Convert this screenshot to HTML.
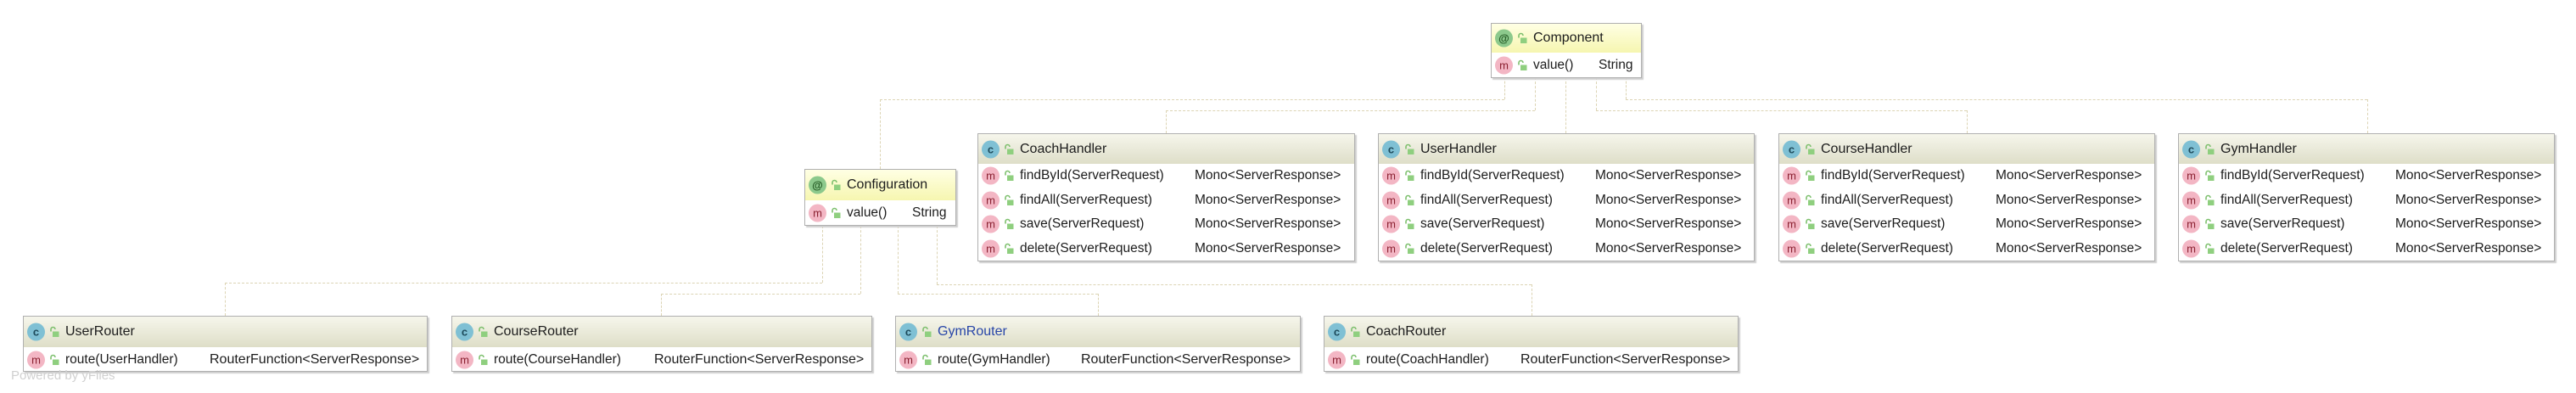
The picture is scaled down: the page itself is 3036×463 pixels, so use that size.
<!DOCTYPE html>
<html><head><meta charset="utf-8"><style>
*{margin:0;padding:0;box-sizing:border-box}
body{width:3036px;height:463px;background:#fff;position:relative;overflow:hidden;font-family:"Liberation Sans","DejaVu Sans",sans-serif;color:#1c1c1c}
.box{position:absolute;background:#fff;border:1px solid #b0b0b0;box-shadow:2px 2px 1px #cfcfcf}
.hd{height:35px;background:linear-gradient(#f6f6ec,#dedec8);position:relative;font-size:16px}
.ann .hd{background:linear-gradient(#ffffe4,#f6f6b0)}
.row{height:28.6px;position:relative;font-size:15.5px}
.t{position:absolute;top:50%;transform:translateY(-50%);white-space:nowrap}
.ic{position:absolute;top:50%;transform:translateY(-50%);left:4px;width:21px;height:21px;border-radius:50%;text-align:center;line-height:21px;font-size:13px}
.c{background:#7fc0d4;color:#1d4a5a;font-weight:bold}
.m{background:#f3b6c4;color:#8a2030}
.a{background:#8cc98c;color:#245a24;font-weight:bold}
.lk{position:absolute;top:50%;transform:translateY(-50%);left:30px;width:12px;height:13px}
.ln{position:absolute;border-color:#dcd4b4;border-style:dashed;border-width:0}
.h{height:0;border-top-width:1px}
.v{width:0;border-left-width:1px}
.rf{left:219px;font-size:16px}
</style></head><body>

<div class="ln v" style="left:1773px;top:91px;height:26px"></div>
<div class="ln h" style="left:1037px;top:117px;width:736px"></div>
<div class="ln v" style="left:1037px;top:117px;height:82px"></div>
<div class="ln v" style="left:1809px;top:91px;height:39px"></div>
<div class="ln h" style="left:1374px;top:130px;width:435px"></div>
<div class="ln v" style="left:1374px;top:130px;height:27px"></div>
<div class="ln v" style="left:1845px;top:91px;height:66px"></div>
<div class="ln v" style="left:1881px;top:91px;height:39px"></div>
<div class="ln h" style="left:1881px;top:130px;width:437px"></div>
<div class="ln v" style="left:2318px;top:130px;height:27px"></div>
<div class="ln v" style="left:1916px;top:91px;height:26px"></div>
<div class="ln h" style="left:1916px;top:117px;width:874px"></div>
<div class="ln v" style="left:2790px;top:117px;height:40px"></div>

<div class="ln v" style="left:969px;top:266px;height:67px"></div>
<div class="ln h" style="left:265px;top:333px;width:704px"></div>
<div class="ln v" style="left:265px;top:333px;height:39px"></div>
<div class="ln v" style="left:1014px;top:266px;height:80px"></div>
<div class="ln h" style="left:779px;top:346px;width:235px"></div>
<div class="ln v" style="left:779px;top:346px;height:26px"></div>
<div class="ln v" style="left:1058px;top:266px;height:80px"></div>
<div class="ln h" style="left:1058px;top:346px;width:236px"></div>
<div class="ln v" style="left:1294px;top:346px;height:26px"></div>
<div class="ln v" style="left:1104px;top:266px;height:69px"></div>
<div class="ln h" style="left:1104px;top:335px;width:701px"></div>
<div class="ln v" style="left:1805px;top:335px;height:37px"></div>

<svg width="0" height="0" style="position:absolute"><defs>
<symbol id="lock" viewBox="0 0 12 13"><path d="M2 6V3.5a2.5 2.5 0 0 1 5 0" fill="none" stroke="#7cbf6c" stroke-width="1.6"/><rect x="4" y="6" width="7.5" height="6.5" fill="#8fcf7f"/></symbol>
</defs></svg>

<div class="box ann" style="left:1757px;top:27px;width:178px;height:65px">
 <div class="hd" style="height:34px"><span class="ic a">@</span><svg class="lk"><use href="#lock"/></svg><span class="t" style="left:49px">Component</span></div>
 <div class="row" style="height:30px"><span class="ic m">m</span><svg class="lk"><use href="#lock"/></svg><span class="t" style="left:49px">value()</span><span class="t" style="left:126px">String</span></div>
</div>

<div class="box ann" style="left:948px;top:199px;width:179px;height:67px">
 <div class="hd" style="height:36px"><span class="ic a">@</span><svg class="lk"><use href="#lock"/></svg><span class="t" style="left:49px">Configuration</span></div>
 <div class="row" style="height:30px"><span class="ic m">m</span><svg class="lk"><use href="#lock"/></svg><span class="t" style="left:49px">value()</span><span class="t" style="left:126px">String</span></div>
</div>

<div class="box" style="left:1152px;top:157px;width:445px;height:151px">
 <div class="hd"><span class="ic c">c</span><svg class="lk"><use href="#lock"/></svg><span class="t" style="left:49px">CoachHandler</span></div>
 <div class="row"><span class="ic m">m</span><svg class="lk"><use href="#lock"/></svg><span class="t" style="left:49px">findById(ServerRequest)</span><span class="t" style="left:255px">Mono&lt;ServerResponse&gt;</span></div>
 <div class="row"><span class="ic m">m</span><svg class="lk"><use href="#lock"/></svg><span class="t" style="left:49px">findAll(ServerRequest)</span><span class="t" style="left:255px">Mono&lt;ServerResponse&gt;</span></div>
 <div class="row"><span class="ic m">m</span><svg class="lk"><use href="#lock"/></svg><span class="t" style="left:49px">save(ServerRequest)</span><span class="t" style="left:255px">Mono&lt;ServerResponse&gt;</span></div>
 <div class="row"><span class="ic m">m</span><svg class="lk"><use href="#lock"/></svg><span class="t" style="left:49px">delete(ServerRequest)</span><span class="t" style="left:255px">Mono&lt;ServerResponse&gt;</span></div>
</div>
<div class="box" style="left:1624px;top:157px;width:444px;height:151px">
 <div class="hd"><span class="ic c">c</span><svg class="lk"><use href="#lock"/></svg><span class="t" style="left:49px">UserHandler</span></div>
 <div class="row"><span class="ic m">m</span><svg class="lk"><use href="#lock"/></svg><span class="t" style="left:49px">findById(ServerRequest)</span><span class="t" style="left:255px">Mono&lt;ServerResponse&gt;</span></div>
 <div class="row"><span class="ic m">m</span><svg class="lk"><use href="#lock"/></svg><span class="t" style="left:49px">findAll(ServerRequest)</span><span class="t" style="left:255px">Mono&lt;ServerResponse&gt;</span></div>
 <div class="row"><span class="ic m">m</span><svg class="lk"><use href="#lock"/></svg><span class="t" style="left:49px">save(ServerRequest)</span><span class="t" style="left:255px">Mono&lt;ServerResponse&gt;</span></div>
 <div class="row"><span class="ic m">m</span><svg class="lk"><use href="#lock"/></svg><span class="t" style="left:49px">delete(ServerRequest)</span><span class="t" style="left:255px">Mono&lt;ServerResponse&gt;</span></div>
</div>
<div class="box" style="left:2096px;top:157px;width:444px;height:151px">
 <div class="hd"><span class="ic c">c</span><svg class="lk"><use href="#lock"/></svg><span class="t" style="left:49px">CourseHandler</span></div>
 <div class="row"><span class="ic m">m</span><svg class="lk"><use href="#lock"/></svg><span class="t" style="left:49px">findById(ServerRequest)</span><span class="t" style="left:255px">Mono&lt;ServerResponse&gt;</span></div>
 <div class="row"><span class="ic m">m</span><svg class="lk"><use href="#lock"/></svg><span class="t" style="left:49px">findAll(ServerRequest)</span><span class="t" style="left:255px">Mono&lt;ServerResponse&gt;</span></div>
 <div class="row"><span class="ic m">m</span><svg class="lk"><use href="#lock"/></svg><span class="t" style="left:49px">save(ServerRequest)</span><span class="t" style="left:255px">Mono&lt;ServerResponse&gt;</span></div>
 <div class="row"><span class="ic m">m</span><svg class="lk"><use href="#lock"/></svg><span class="t" style="left:49px">delete(ServerRequest)</span><span class="t" style="left:255px">Mono&lt;ServerResponse&gt;</span></div>
</div>
<div class="box" style="left:2567px;top:157px;width:444px;height:151px">
 <div class="hd"><span class="ic c">c</span><svg class="lk"><use href="#lock"/></svg><span class="t" style="left:49px">GymHandler</span></div>
 <div class="row"><span class="ic m">m</span><svg class="lk"><use href="#lock"/></svg><span class="t" style="left:49px">findById(ServerRequest)</span><span class="t" style="left:255px">Mono&lt;ServerResponse&gt;</span></div>
 <div class="row"><span class="ic m">m</span><svg class="lk"><use href="#lock"/></svg><span class="t" style="left:49px">findAll(ServerRequest)</span><span class="t" style="left:255px">Mono&lt;ServerResponse&gt;</span></div>
 <div class="row"><span class="ic m">m</span><svg class="lk"><use href="#lock"/></svg><span class="t" style="left:49px">save(ServerRequest)</span><span class="t" style="left:255px">Mono&lt;ServerResponse&gt;</span></div>
 <div class="row"><span class="ic m">m</span><svg class="lk"><use href="#lock"/></svg><span class="t" style="left:49px">delete(ServerRequest)</span><span class="t" style="left:255px">Mono&lt;ServerResponse&gt;</span></div>
</div>

<div class="box" style="left:27px;top:372px;width:477px;height:66px">
 <div class="hd" style="height:36px"><span class="ic c">c</span><svg class="lk"><use href="#lock"/></svg><span class="t" style="left:49px">UserRouter</span></div>
 <div class="row" style="height:29px"><span class="ic m">m</span><svg class="lk"><use href="#lock"/></svg><span class="t" style="left:49px">route(UserHandler)</span><span class="t rf" style="left:219px">RouterFunction&lt;ServerResponse&gt;</span></div>
</div>
<div class="box" style="left:532px;top:372px;width:496px;height:66px">
 <div class="hd" style="height:36px"><span class="ic c">c</span><svg class="lk"><use href="#lock"/></svg><span class="t" style="left:49px">CourseRouter</span></div>
 <div class="row" style="height:29px"><span class="ic m">m</span><svg class="lk"><use href="#lock"/></svg><span class="t" style="left:49px">route(CourseHandler)</span><span class="t rf" style="left:238px">RouterFunction&lt;ServerResponse&gt;</span></div>
</div>
<div class="box" style="left:1055px;top:372px;width:478px;height:66px">
 <div class="hd" style="height:36px"><span class="ic c">c</span><svg class="lk"><use href="#lock"/></svg><span class="t" style="left:49px;color:#2846a8">GymRouter</span></div>
 <div class="row" style="height:29px"><span class="ic m">m</span><svg class="lk"><use href="#lock"/></svg><span class="t" style="left:49px">route(GymHandler)</span><span class="t rf" style="left:218px">RouterFunction&lt;ServerResponse&gt;</span></div>
</div>
<div class="box" style="left:1560px;top:372px;width:489px;height:66px">
 <div class="hd" style="height:36px"><span class="ic c">c</span><svg class="lk"><use href="#lock"/></svg><span class="t" style="left:49px">CoachRouter</span></div>
 <div class="row" style="height:29px"><span class="ic m">m</span><svg class="lk"><use href="#lock"/></svg><span class="t" style="left:49px">route(CoachHandler)</span><span class="t rf" style="left:231px">RouterFunction&lt;ServerResponse&gt;</span></div>
</div>

<div style="position:absolute;left:13px;top:434px;font-size:15px;color:#d0d0d0">Powered by yFiles</div>
</body></html>
